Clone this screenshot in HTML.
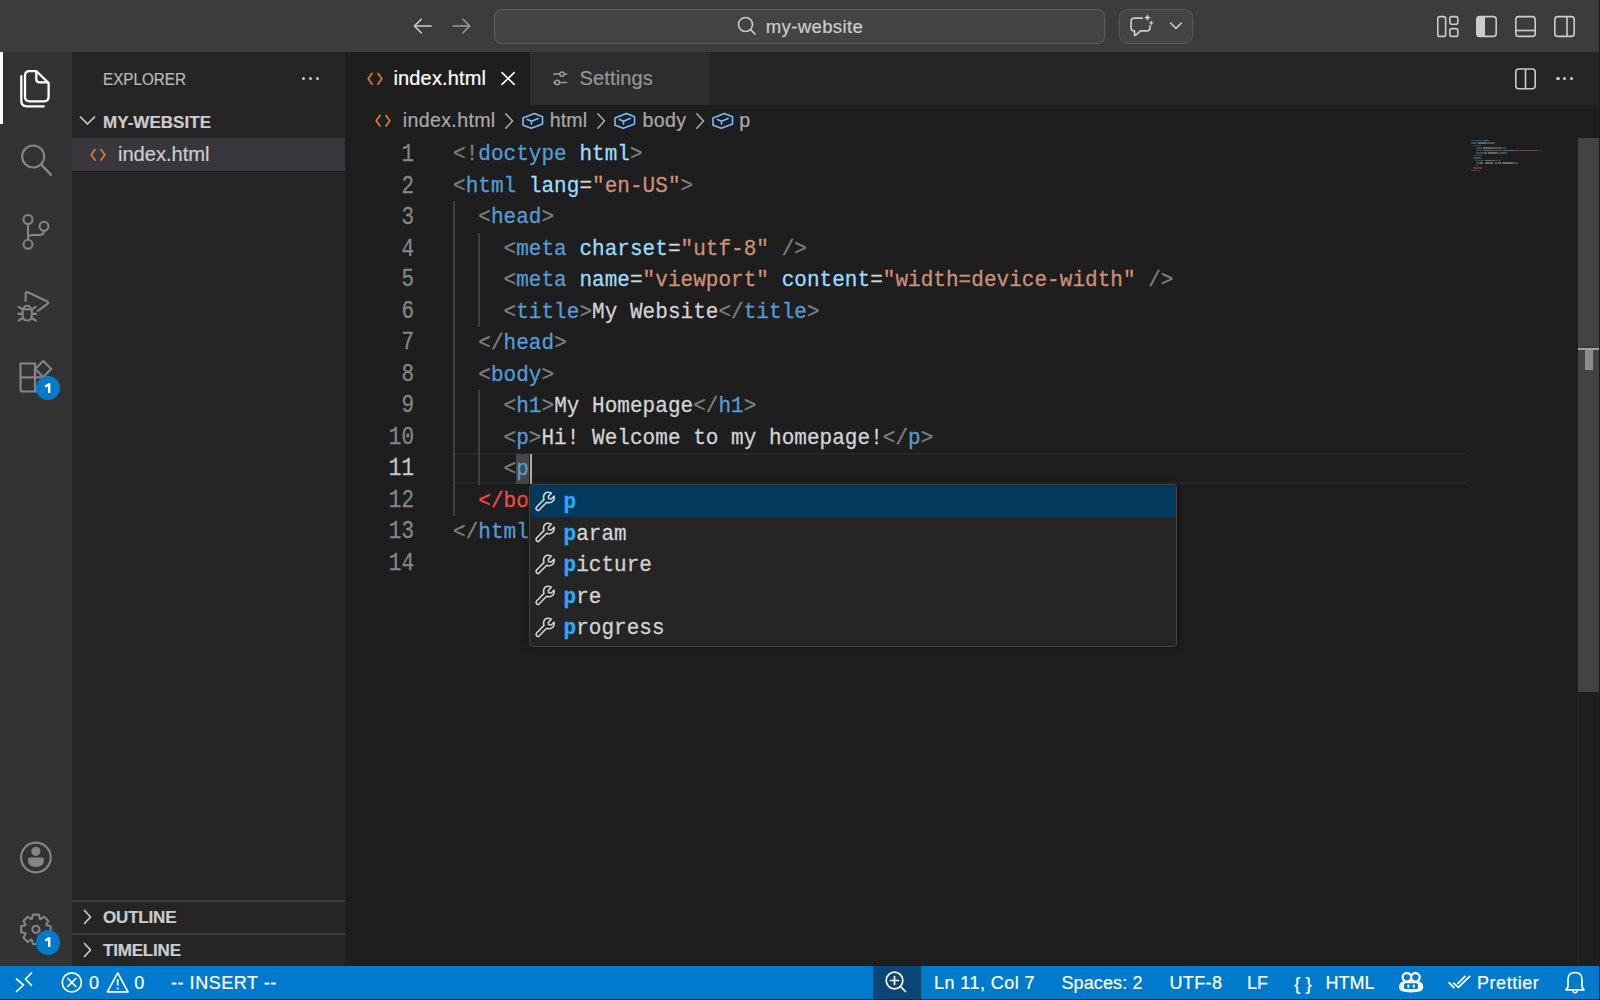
<!DOCTYPE html>
<html><head><meta charset="utf-8"><title>VS Code</title><style>
*{box-sizing:border-box;margin:0;padding:0}
html,body{width:1600px;height:1000px;overflow:hidden;background:#1e1e1e;font-family:"Liberation Sans",sans-serif;position:relative}
.abs{position:absolute}
svg{position:absolute;overflow:visible}
.t{position:absolute;white-space:pre;line-height:1;-webkit-text-stroke:0.2px currentColor}
.ln{position:absolute;left:360px;width:54px;text-align:right;color:#858585;font-family:"Liberation Mono",monospace;font-size:21px;line-height:31.5px;height:31.5px;transform:translateY(1.5px) scaleY(1.2);transform-origin:0 21px;-webkit-text-stroke:0.25px currentColor}
.cl{position:absolute;left:453px;color:#d4d4d4;font-family:"Liberation Mono",monospace;font-size:21px;line-height:31.5px;height:31.5px;white-space:pre;letter-spacing:0.038px;transform:translateY(1.3px) scaleY(1.09);transform-origin:0 21px;-webkit-text-stroke:0.25px currentColor}
.tg{color:#569cd6}.pu{color:#808080}.at{color:#9cdcfe}.st{color:#ce9178}.er{color:#f14c4c}
</style></head><body>
<div class="abs" style="left:0px;top:0px;width:1600px;height:52px;background:#3c3c3c;"></div>
<div class="abs" style="left:0px;top:52px;width:72px;height:914px;background:#333333;"></div>
<div class="abs" style="left:72px;top:52px;width:273px;height:914px;background:#252526;"></div>
<div class="abs" style="left:345px;top:52px;width:1255px;height:53px;background:#252526;"></div>
<div class="abs" style="left:0px;top:966px;width:1600px;height:34px;background:#007acc;"></div>
<svg style="left:405px;top:10px;" width="36" height="32" viewBox="0 0 36 32"><path d="M9.4 16 H26.2 M9.4 16 L16.2 9.2 M9.4 16 L16.2 22.8" stroke="#cccccc" stroke-width="1.6" fill="none" stroke-linecap="round" stroke-linejoin="round"/></svg>
<svg style="left:444px;top:10px;" width="36" height="32" viewBox="0 0 36 32"><path d="M9.2 16 H25.8 M25.8 16 L19 9.2 M25.8 16 L19 22.8" stroke="#9a9a9a" stroke-width="1.6" fill="none" stroke-linecap="round" stroke-linejoin="round"/></svg>
<div class="abs" style="left:493.5px;top:9px;width:611px;height:34.5px;border:1.5px solid #606060;border-radius:7.5px;background:#444444"></div>
<svg style="left:736px;top:14.6px;" width="22" height="22" viewBox="0 0 22 22"><circle cx="9.5" cy="9.5" r="7" stroke="#cccccc" stroke-width="1.6" fill="none"/><path d="M14.5 14.5 L19 19" stroke="#cccccc" stroke-width="1.7" stroke-linecap="round"/></svg>
<div class="t" style="left:765.8px;top:18.06px;font-size:18.6px;color:#cccccc;font-family:'Liberation Sans',sans-serif;letter-spacing:0.322px;">my-website</div>
<div class="abs" style="left:1119px;top:9px;width:74px;height:34.5px;border:1.5px solid #5a5a5a;border-radius:8.5px;background:#444444"></div>
<svg style="left:1126px;top:12px;" width="32" height="30" viewBox="0 0 32 30"><path d="M16.3 6.1 H8.6 Q5.05 6.1 5.05 9.6 V15.4 Q5.05 18.9 8.5 18.9 V22.6 Q8.5 24 9.7 23.1 L14.6 18.9 H20.5 Q23.95 18.9 23.95 15.4 V13.8" stroke="#cccccc" stroke-width="1.7" fill="none" stroke-linejoin="round" stroke-linecap="round"/><path d="M21.4 1.8 Q21.9 5.3 25.2 5.5 Q21.9 5.9 21.4 9.3 Q20.9 5.9 17.6 5.5 Q20.9 5.3 21.4 1.8Z" fill="#cccccc"/><path d="M25.3 8.2 Q25.6 10.7 28.1 10.8 Q25.6 11.2 25.3 13.7 Q25 11.2 22.5 10.8 Q25 10.7 25.3 8.2Z" fill="#cccccc"/></svg>
<svg style="left:1166px;top:18px;" width="20" height="14" viewBox="0 0 20 14"><path d="M4.6 5.0 L10 10.4 L15.4 5.0" stroke="#cccccc" stroke-width="1.6" fill="none" stroke-linecap="round" stroke-linejoin="round"/></svg>
<svg style="left:1430px;top:8px;" width="34" height="36" viewBox="0 0 34 36"><rect x="7.8" y="8.6" width="7.8" height="19.8" rx="2" stroke="#cccccc" stroke-width="1.6" fill="none"/><rect x="19.8" y="8.6" width="8" height="7.6" rx="2" stroke="#cccccc" stroke-width="1.6" fill="none"/><rect x="19.8" y="20.6" width="8" height="7.8" rx="2" stroke="#cccccc" stroke-width="1.6" fill="none"/></svg>
<svg style="left:1470px;top:8px;" width="34" height="36" viewBox="0 0 34 36"><path d="M9 8.6 H15 V28.4 H9 Q6.8 28.4 6.8 26.2 V10.8 Q6.8 8.6 9 8.6Z" fill="#cccccc"/><rect x="6.8" y="8.6" width="19.4" height="19.8" rx="3" stroke="#cccccc" stroke-width="1.6" fill="none"/></svg>
<svg style="left:1509px;top:8px;" width="34" height="36" viewBox="0 0 34 36"><rect x="6.8" y="8.6" width="19.4" height="19.8" rx="3" stroke="#cccccc" stroke-width="1.6" fill="none"/><path d="M6.8 22.5 H26.2" stroke="#cccccc" stroke-width="1.6" fill="none"/></svg>
<svg style="left:1548px;top:8px;" width="34" height="36" viewBox="0 0 34 36"><rect x="6.8" y="8.6" width="19.4" height="19.8" rx="3" stroke="#cccccc" stroke-width="1.6" fill="none"/><path d="M19 8.6 V28.4" stroke="#cccccc" stroke-width="1.6" fill="none"/></svg>
<div class="abs" style="left:0px;top:52px;width:3px;height:72px;background:#ffffff;"></div>
<svg style="left:14px;top:64px;" width="44" height="48" viewBox="0 0 44 48"><path d="M14.5 7.2 H22.5 L34.6 19 V32.8 Q34.6 37.3 30.1 37.3 H15.5 Q11 37.3 11 32.8 V11.7 Q11 7.2 15.5 7.2Z" stroke="#ffffff" stroke-width="2.3" fill="none" stroke-linejoin="round"/><path d="M22.3 7.5 V15.2 Q22.3 18.4 25.5 18.4 H34.3" stroke="#ffffff" stroke-width="2.3" fill="none" stroke-linejoin="round"/><path d="M7.3 12.2 V36.8 Q7.3 42.3 12.8 42.3 H29.8" stroke="#ffffff" stroke-width="2.3" fill="none" stroke-linecap="round" stroke-linejoin="round"/></svg>
<svg style="left:14px;top:136px;" width="44" height="48" viewBox="0 0 44 48"><circle cx="19.2" cy="20.5" r="11" stroke="#858585" stroke-width="2.2" fill="none"/><path d="M27.3 28.6 L37 38.8" stroke="#858585" stroke-width="2.4" stroke-linecap="round"/></svg>
<svg style="left:14px;top:208px;" width="44" height="48" viewBox="0 0 44 48"><circle cx="14" cy="11.5" r="4.5" stroke="#858585" stroke-width="2.1" fill="none"/><circle cx="30" cy="18.3" r="4.5" stroke="#858585" stroke-width="2.1" fill="none"/><circle cx="14" cy="36.3" r="4.5" stroke="#858585" stroke-width="2.1" fill="none"/><path d="M14 16 V31.8 M30 22.8 Q30 27 25.5 27 H18.5 Q14 27 14 30" stroke="#858585" stroke-width="2.1" fill="none"/></svg>
<svg style="left:14px;top:280px;" width="44" height="48" viewBox="0 0 44 48"><path d="M11.6 20.9 V14.2 Q11.6 11.2 14.3 12.5 L33 21.3 Q35.5 22.7 33.1 24.2 L23.8 30.8" stroke="#858585" stroke-width="2.1" fill="none" stroke-linecap="round" stroke-linejoin="round"/><path d="M9.6 29.3 A3.6 3.6 0 0 1 16.8 29.3 M8.6 29.3 H17.9 V35.3 Q17.9 40.5 13.25 40.5 Q8.6 40.5 8.6 35.3 Z" stroke="#858585" stroke-width="2.1" fill="none" stroke-linejoin="round"/><path d="M4.6 26.9 L7.9 28.8 M4.4 33.9 H7.9 M4.6 40.7 L7.9 38.3 M21.9 26.9 L18.6 28.8 M22.1 33.9 H18.6 M21.9 40.7 L18.6 38.3" stroke="#858585" stroke-width="2.1" fill="none" stroke-linecap="round"/></svg>
<svg style="left:14px;top:352px;" width="44" height="48" viewBox="0 0 44 48"><path d="M6.5 11.5 H21 V39.5 H8.5 Q6.5 39.5 6.5 37.5Z M6.5 25.3 H35 V39.5 H21" stroke="#858585" stroke-width="2.2" fill="none" stroke-linejoin="round"/><path d="M29.2 9 L37.2 17 L29.2 25 L21.2 17Z" stroke="#858585" stroke-width="2.2" fill="none" stroke-linejoin="round"/></svg>
<div class="abs" style="left:35.9px;top:376px;width:24.2px;height:24.2px;border-radius:50%;background:#007acc;border:0"></div>
<svg style="left:36px;top:376px;" width="24" height="24" viewBox="0 0 24 24"><path d="M9.3 10.7 L13.2 7.9 M13.2 7.2 V17" stroke="#ffffff" stroke-width="2.4" fill="none" stroke-linejoin="round"/></svg>
<svg style="left:14px;top:822px;left:14px;top:822px" width="44" height="48" viewBox="0 0 44 48"><circle cx="21.9" cy="35.5" r="14.8" stroke="#858585" stroke-width="2.2" fill="none"/><circle cx="21.9" cy="29.3" r="4.6" fill="#858585"/><path d="M13.8 37.5 Q13.8 35.5 16 35.5 H27.8 Q30 35.5 30 37.5 V38 Q30 45 22 45 Q13.8 45 13.8 38Z" fill="#858585"/></svg>
<svg style="left:14px;top:892px;left:14px;top:892px" width="44" height="48" viewBox="0 0 44 48"><polygon points="17.92,26.72 18.92,22.60 24.88,22.60 25.88,26.72 26.56,27.01 30.19,24.80 34.40,29.01 32.19,32.64 32.48,33.32 36.60,34.32 36.60,40.28 32.48,41.28 32.19,41.96 34.40,45.59 30.19,49.80 26.56,47.59 25.88,47.88 24.88,52.00 18.92,52.00 17.92,47.88 17.24,47.59 13.61,49.80 9.40,45.59 11.61,41.96 11.32,41.28 7.20,40.28 7.20,34.32 11.32,33.32 11.61,32.64 9.40,29.01 13.61,24.80 17.24,27.01" stroke="#858585" stroke-width="2.1" fill="none" stroke-linejoin="round"/><circle cx="21.9" cy="37.3" r="3.6" stroke="#858585" stroke-width="2.1" fill="none"/></svg>
<div class="abs" style="left:35.9px;top:930.4px;width:24.2px;height:24.2px;border-radius:50%;background:#007acc"></div>
<svg style="left:36px;top:930.4px;" width="24" height="24" viewBox="0 0 24 24"><path d="M9.3 10.7 L13.2 7.9 M13.2 7.2 V17" stroke="#ffffff" stroke-width="2.4" fill="none" stroke-linejoin="round"/></svg>
<div class="t" style="left:103.0px;top:72.15px;font-size:16.6px;color:#bbbbbb;font-family:'Liberation Sans',sans-serif;transform:scaleX(0.9181);transform-origin:0 0;">EXPLORER</div>
<div class="abs" style="left:301.9px;top:76.8px;width:3.2px;height:3.2px;border-radius:50%;background:#cccccc"></div>
<div class="abs" style="left:308.9px;top:76.8px;width:3.2px;height:3.2px;border-radius:50%;background:#cccccc"></div>
<div class="abs" style="left:315.9px;top:76.8px;width:3.2px;height:3.2px;border-radius:50%;background:#cccccc"></div>
<svg style="left:76px;top:108px;" width="24" height="26" viewBox="0 0 24 26"><path d="M4.5 9 L11.5 16 L18.5 9" stroke="#cccccc" stroke-width="1.7" fill="none" stroke-linecap="round" stroke-linejoin="round"/></svg>
<div class="t" style="left:103.0px;top:113.61px;font-size:17px;color:#cccccc;font-family:'Liberation Sans',sans-serif;font-weight:bold;letter-spacing:0.033px;">MY-WEBSITE</div>
<div class="abs" style="left:72px;top:138px;width:273px;height:33px;background:#37373d;"></div>
<svg style="left:88.1px;top:144.8px;" width="20" height="20" viewBox="0 0 20 20"><path d="M7.0 4.5 L3.2 9.8 L7.0 15.1 M13.0 4.5 L16.8 9.8 L13.0 15.1" stroke="#e37933" stroke-width="1.7" fill="none" stroke-linecap="round" stroke-linejoin="round"/></svg>
<div class="t" style="left:118.0px;top:144.20px;font-size:20.2px;color:#cccccc;font-family:'Liberation Sans',sans-serif;letter-spacing:-0.056px;">index.html</div>
<div class="abs" style="left:72px;top:899.5px;width:273px;height:2px;background:#3d3d3d;"></div>
<div class="abs" style="left:72px;top:932.8px;width:273px;height:2px;background:#3d3d3d;"></div>
<svg style="left:76px;top:906px;" width="24" height="22" viewBox="0 0 24 22"><path d="M8.5 4.5 L14.5 11 L8.5 17.5" stroke="#cccccc" stroke-width="1.7" fill="none" stroke-linecap="round" stroke-linejoin="round"/></svg>
<div class="t" style="left:103.0px;top:909.21px;font-size:17px;color:#cccccc;font-family:'Liberation Sans',sans-serif;font-weight:bold;letter-spacing:-0.183px;">OUTLINE</div>
<svg style="left:76px;top:939px;" width="24" height="22" viewBox="0 0 24 22"><path d="M8.5 4.5 L14.5 11 L8.5 17.5" stroke="#cccccc" stroke-width="1.7" fill="none" stroke-linecap="round" stroke-linejoin="round"/></svg>
<div class="t" style="left:103.0px;top:941.91px;font-size:17px;color:#cccccc;font-family:'Liberation Sans',sans-serif;font-weight:bold;letter-spacing:-0.186px;">TIMELINE</div>
<div class="abs" style="left:345px;top:52px;width:185px;height:53px;background:#1e1e1e;"></div>
<div class="abs" style="left:530px;top:52px;width:179.5px;height:53px;background:#2d2d2d;"></div>
<svg style="left:364.5px;top:68.5px;" width="20" height="20" viewBox="0 0 20 20"><path d="M7.0 4.5 L3.2 9.8 L7.0 15.1 M13.0 4.5 L16.8 9.8 L13.0 15.1" stroke="#e37933" stroke-width="1.7" fill="none" stroke-linecap="round" stroke-linejoin="round"/></svg>
<div class="t" style="left:393.5px;top:68.37px;font-size:20px;color:#ffffff;font-family:'Liberation Sans',sans-serif;letter-spacing:0.144px;">index.html</div>
<svg style="left:497px;top:68px;" width="22" height="22" viewBox="0 0 22 22"><path d="M5 4.6 L17.2 16.4 M17.2 4.6 L5 16.4" stroke="#ffffff" stroke-width="1.6" stroke-linecap="round"/></svg>
<svg style="left:549px;top:67px;" width="22" height="24" viewBox="0 0 22 24"><path d="M4 7.1 H18.2 M4 15.5 H18.2" stroke="#9d9d9d" stroke-width="1.5"/><circle cx="13" cy="7.1" r="2.2" fill="#2d2d2d" stroke="#9d9d9d" stroke-width="1.5"/><circle cx="8.2" cy="15.5" r="2.2" fill="#2d2d2d" stroke="#9d9d9d" stroke-width="1.5"/></svg>
<div class="t" style="left:579.5px;top:68.37px;font-size:20px;color:#969696;font-family:'Liberation Sans',sans-serif;letter-spacing:0.143px;">Settings</div>
<svg style="left:1509px;top:62px;" width="34" height="36" viewBox="0 0 34 36"><rect x="6.8" y="7" width="19.4" height="19.8" rx="3" stroke="#cccccc" stroke-width="1.6" fill="none"/><path d="M16.5 7 V26.8" stroke="#cccccc" stroke-width="1.6" fill="none"/></svg>
<div class="abs" style="left:1556.4px;top:76.5px;width:3.2px;height:3.2px;border-radius:50%;background:#cccccc"></div>
<div class="abs" style="left:1563.0px;top:76.5px;width:3.2px;height:3.2px;border-radius:50%;background:#cccccc"></div>
<div class="abs" style="left:1569.6000000000001px;top:76.5px;width:3.2px;height:3.2px;border-radius:50%;background:#cccccc"></div>
<svg style="left:373.4px;top:111.3px;" width="20" height="20" viewBox="0 0 20 20"><path d="M7.0 4.5 L3.2 9.8 L7.0 15.1 M13.0 4.5 L16.8 9.8 L13.0 15.1" stroke="#e37933" stroke-width="1.7" fill="none" stroke-linecap="round" stroke-linejoin="round"/></svg>
<div class="t" style="left:402.8px;top:111.41px;font-size:19.6px;color:#a9a9a9;font-family:'Liberation Sans',sans-serif;letter-spacing:0.344px;">index.html</div>
<svg style="left:501.5px;top:110px;" width="14" height="22" viewBox="0 0 14 22"><path d="M3.8 3.8 L10.5 11 L3.8 18.2" stroke="#a9a9a9" stroke-width="1.6" fill="none" stroke-linecap="round" stroke-linejoin="round"/></svg>
<svg style="left:520.5px;top:109px;" width="24" height="24" viewBox="0 0 24 24"><path d="M13.4 4.6 L21.5 7.8 V15.1 L10.3 19.3 L2 16.2 V9.1Z" stroke="#75beff" stroke-width="1.6" fill="none" stroke-linejoin="round"/><path d="M6.4 10.4 L10.5 12.3 L17.1 9.4 M10.5 12.3 V15.1" stroke="#75beff" stroke-width="1.6" fill="none" stroke-linecap="round" stroke-linejoin="round"/></svg>
<div class="t" style="left:549.8px;top:111.41px;font-size:19.6px;color:#a9a9a9;font-family:'Liberation Sans',sans-serif;letter-spacing:0.067px;">html</div>
<svg style="left:594px;top:110px;" width="14" height="22" viewBox="0 0 14 22"><path d="M3.8 3.8 L10.5 11 L3.8 18.2" stroke="#a9a9a9" stroke-width="1.6" fill="none" stroke-linecap="round" stroke-linejoin="round"/></svg>
<svg style="left:612.5px;top:109px;" width="24" height="24" viewBox="0 0 24 24"><path d="M13.4 4.6 L21.5 7.8 V15.1 L10.3 19.3 L2 16.2 V9.1Z" stroke="#75beff" stroke-width="1.6" fill="none" stroke-linejoin="round"/><path d="M6.4 10.4 L10.5 12.3 L17.1 9.4 M10.5 12.3 V15.1" stroke="#75beff" stroke-width="1.6" fill="none" stroke-linecap="round" stroke-linejoin="round"/></svg>
<div class="t" style="left:642.5px;top:111.41px;font-size:19.6px;color:#a9a9a9;font-family:'Liberation Sans',sans-serif;letter-spacing:0.333px;">body</div>
<svg style="left:692.5px;top:110px;" width="14" height="22" viewBox="0 0 14 22"><path d="M3.8 3.8 L10.5 11 L3.8 18.2" stroke="#a9a9a9" stroke-width="1.6" fill="none" stroke-linecap="round" stroke-linejoin="round"/></svg>
<svg style="left:710.5px;top:109px;" width="24" height="24" viewBox="0 0 24 24"><path d="M13.4 4.6 L21.5 7.8 V15.1 L10.3 19.3 L2 16.2 V9.1Z" stroke="#75beff" stroke-width="1.6" fill="none" stroke-linejoin="round"/><path d="M6.4 10.4 L10.5 12.3 L17.1 9.4 M10.5 12.3 V15.1" stroke="#75beff" stroke-width="1.6" fill="none" stroke-linecap="round" stroke-linejoin="round"/></svg>
<div class="t" style="left:739.2px;top:111.41px;font-size:19.6px;color:#a9a9a9;font-family:'Liberation Sans',sans-serif;">p</div>
<div class="abs" style="left:453px;top:453.0px;width:1013px;height:31px;border-top:2px solid #282828;border-bottom:2px solid #282828"></div>
<div class="abs" style="left:453px;top:201px;width:2px;height:315px;background:#404040;"></div>
<div class="abs" style="left:478px;top:232.5px;width:2px;height:94.5px;background:#404040;"></div>
<div class="abs" style="left:478px;top:390px;width:2px;height:94.5px;background:#404040;"></div>
<div class="abs" style="left:516px;top:453.5px;width:12.6px;height:30.5px;background:#484848;"></div>
<div class="ln" style="top:138.0px;color:#858585">1</div>
<div class="cl" style="top:138.0px"><span class="pu">&lt;!</span><span class="tg">doctype</span> <span class="at">html</span><span class="pu">&gt;</span></div>
<div class="ln" style="top:169.5px;color:#858585">2</div>
<div class="cl" style="top:169.5px"><span class="pu">&lt;</span><span class="tg">html</span> <span class="at">lang</span>=<span class="st">"en-US"</span><span class="pu">&gt;</span></div>
<div class="ln" style="top:201.0px;color:#858585">3</div>
<div class="cl" style="top:201.0px">  <span class="pu">&lt;</span><span class="tg">head</span><span class="pu">&gt;</span></div>
<div class="ln" style="top:232.5px;color:#858585">4</div>
<div class="cl" style="top:232.5px">    <span class="pu">&lt;</span><span class="tg">meta</span> <span class="at">charset</span>=<span class="st">"utf-8"</span> <span class="pu">/&gt;</span></div>
<div class="ln" style="top:264.0px;color:#858585">5</div>
<div class="cl" style="top:264.0px">    <span class="pu">&lt;</span><span class="tg">meta</span> <span class="at">name</span>=<span class="st">"viewport"</span> <span class="at">content</span>=<span class="st">"width=device-width"</span> <span class="pu">/&gt;</span></div>
<div class="ln" style="top:295.5px;color:#858585">6</div>
<div class="cl" style="top:295.5px">    <span class="pu">&lt;</span><span class="tg">title</span><span class="pu">&gt;</span>My Website<span class="pu">&lt;/</span><span class="tg">title</span><span class="pu">&gt;</span></div>
<div class="ln" style="top:327.0px;color:#858585">7</div>
<div class="cl" style="top:327.0px">  <span class="pu">&lt;/</span><span class="tg">head</span><span class="pu">&gt;</span></div>
<div class="ln" style="top:358.5px;color:#858585">8</div>
<div class="cl" style="top:358.5px">  <span class="pu">&lt;</span><span class="tg">body</span><span class="pu">&gt;</span></div>
<div class="ln" style="top:390.0px;color:#858585">9</div>
<div class="cl" style="top:390.0px">    <span class="pu">&lt;</span><span class="tg">h1</span><span class="pu">&gt;</span>My Homepage<span class="pu">&lt;/</span><span class="tg">h1</span><span class="pu">&gt;</span></div>
<div class="ln" style="top:421.5px;color:#858585">10</div>
<div class="cl" style="top:421.5px">    <span class="pu">&lt;</span><span class="tg">p</span><span class="pu">&gt;</span>Hi! Welcome to my homepage!<span class="pu">&lt;/</span><span class="tg">p</span><span class="pu">&gt;</span></div>
<div class="ln" style="top:453.0px;color:#c6c6c6">11</div>
<div class="cl" style="top:453.0px">    <span class="pu">&lt;</span><span class="tg">p</span></div>
<div class="ln" style="top:484.5px;color:#858585">12</div>
<div class="cl" style="top:484.5px">  <span class="er">&lt;/body&gt;</span></div>
<div class="ln" style="top:516.0px;color:#858585">13</div>
<div class="cl" style="top:516.0px"><span class="pu">&lt;/</span><span class="tg">html</span><span class="pu">&gt;</span></div>
<div class="ln" style="top:547.5px;color:#858585">14</div>
<div class="cl" style="top:547.5px"></div>
<div class="abs" style="left:529.5px;top:454px;width:2.5px;height:30px;background:#aeafad;"></div>
<div class="abs" style="left:529px;top:484px;width:648px;height:163px;background:#252526;border:1.5px solid #454545;border-radius:4px;box-shadow:0 0 8px rgba(0,0,0,0.36)"></div>
<div class="abs" style="left:530.5px;top:485.5px;width:645px;height:31.5px;background:#04395e;"></div>
<svg style="left:533px;top:488.5px;" width="26" height="26" viewBox="0 0 26 26"><path d="M15.2 3.2 Q11.2 3.2 10.6 7.4 Q10.4 9 11 10.4 L3.6 18 Q2.4 19.3 3.6 20.8 Q5 22 6.3 20.8 L13.7 13.2 Q15 13.9 16.7 13.7 Q21 13 21.2 8.8 Q21.3 8 21 7.2 L18.2 10 L15.6 9.8 L15.4 7.2 L18.3 4.2 Q16.8 3.2 15.2 3.2Z" stroke="#d4d4d4" stroke-width="1.6" fill="none" stroke-linejoin="round"/></svg>
<div class="cl" style="left:563.5px;top:486.3px"><span style="color:#2aaaff;font-weight:bold">p</span></div>
<svg style="left:533px;top:520.0px;" width="26" height="26" viewBox="0 0 26 26"><path d="M15.2 3.2 Q11.2 3.2 10.6 7.4 Q10.4 9 11 10.4 L3.6 18 Q2.4 19.3 3.6 20.8 Q5 22 6.3 20.8 L13.7 13.2 Q15 13.9 16.7 13.7 Q21 13 21.2 8.8 Q21.3 8 21 7.2 L18.2 10 L15.6 9.8 L15.4 7.2 L18.3 4.2 Q16.8 3.2 15.2 3.2Z" stroke="#d4d4d4" stroke-width="1.6" fill="none" stroke-linejoin="round"/></svg>
<div class="cl" style="left:563.5px;top:517.8px"><span style="color:#2aaaff;font-weight:bold">p</span>aram</div>
<svg style="left:533px;top:551.5px;" width="26" height="26" viewBox="0 0 26 26"><path d="M15.2 3.2 Q11.2 3.2 10.6 7.4 Q10.4 9 11 10.4 L3.6 18 Q2.4 19.3 3.6 20.8 Q5 22 6.3 20.8 L13.7 13.2 Q15 13.9 16.7 13.7 Q21 13 21.2 8.8 Q21.3 8 21 7.2 L18.2 10 L15.6 9.8 L15.4 7.2 L18.3 4.2 Q16.8 3.2 15.2 3.2Z" stroke="#d4d4d4" stroke-width="1.6" fill="none" stroke-linejoin="round"/></svg>
<div class="cl" style="left:563.5px;top:549.3px"><span style="color:#2aaaff;font-weight:bold">p</span>icture</div>
<svg style="left:533px;top:583.0px;" width="26" height="26" viewBox="0 0 26 26"><path d="M15.2 3.2 Q11.2 3.2 10.6 7.4 Q10.4 9 11 10.4 L3.6 18 Q2.4 19.3 3.6 20.8 Q5 22 6.3 20.8 L13.7 13.2 Q15 13.9 16.7 13.7 Q21 13 21.2 8.8 Q21.3 8 21 7.2 L18.2 10 L15.6 9.8 L15.4 7.2 L18.3 4.2 Q16.8 3.2 15.2 3.2Z" stroke="#d4d4d4" stroke-width="1.6" fill="none" stroke-linejoin="round"/></svg>
<div class="cl" style="left:563.5px;top:580.8px"><span style="color:#2aaaff;font-weight:bold">p</span>re</div>
<svg style="left:533px;top:614.5px;" width="26" height="26" viewBox="0 0 26 26"><path d="M15.2 3.2 Q11.2 3.2 10.6 7.4 Q10.4 9 11 10.4 L3.6 18 Q2.4 19.3 3.6 20.8 Q5 22 6.3 20.8 L13.7 13.2 Q15 13.9 16.7 13.7 Q21 13 21.2 8.8 Q21.3 8 21 7.2 L18.2 10 L15.6 9.8 L15.4 7.2 L18.3 4.2 Q16.8 3.2 15.2 3.2Z" stroke="#d4d4d4" stroke-width="1.6" fill="none" stroke-linejoin="round"/></svg>
<div class="cl" style="left:563.5px;top:612.3px"><span style="color:#2aaaff;font-weight:bold">p</span>rogress</div>
<div class="abs" style="left:1471.00px;top:139.50px;width:2.49px;height:1.5px;background:#808080;opacity:0.4"></div>
<div class="abs" style="left:1473.49px;top:139.50px;width:8.71px;height:1.5px;background:#569cd6;opacity:0.4"></div>
<div class="abs" style="left:1483.45px;top:139.50px;width:4.98px;height:1.5px;background:#9cdcfe;opacity:0.4"></div>
<div class="abs" style="left:1488.43px;top:139.50px;width:1.25px;height:1.5px;background:#808080;opacity:0.4"></div>
<div class="abs" style="left:1471.00px;top:142.00px;width:1.25px;height:1.5px;background:#808080;opacity:0.4"></div>
<div class="abs" style="left:1472.24px;top:142.00px;width:4.98px;height:1.5px;background:#569cd6;opacity:0.4"></div>
<div class="abs" style="left:1478.47px;top:142.00px;width:4.98px;height:1.5px;background:#9cdcfe;opacity:0.4"></div>
<div class="abs" style="left:1483.45px;top:142.00px;width:1.25px;height:1.5px;background:#d4d4d4;opacity:0.4"></div>
<div class="abs" style="left:1484.69px;top:142.00px;width:8.71px;height:1.5px;background:#ce9178;opacity:0.4"></div>
<div class="abs" style="left:1493.41px;top:142.00px;width:1.25px;height:1.5px;background:#808080;opacity:0.4"></div>
<div class="abs" style="left:1473.49px;top:144.50px;width:1.25px;height:1.5px;background:#808080;opacity:0.4"></div>
<div class="abs" style="left:1474.73px;top:144.50px;width:4.98px;height:1.5px;background:#569cd6;opacity:0.4"></div>
<div class="abs" style="left:1479.71px;top:144.50px;width:1.25px;height:1.5px;background:#808080;opacity:0.4"></div>
<div class="abs" style="left:1475.98px;top:147.00px;width:1.25px;height:1.5px;background:#808080;opacity:0.4"></div>
<div class="abs" style="left:1477.22px;top:147.00px;width:4.98px;height:1.5px;background:#569cd6;opacity:0.4"></div>
<div class="abs" style="left:1483.45px;top:147.00px;width:8.71px;height:1.5px;background:#9cdcfe;opacity:0.4"></div>
<div class="abs" style="left:1492.16px;top:147.00px;width:1.25px;height:1.5px;background:#d4d4d4;opacity:0.4"></div>
<div class="abs" style="left:1493.41px;top:147.00px;width:8.71px;height:1.5px;background:#ce9178;opacity:0.4"></div>
<div class="abs" style="left:1503.37px;top:147.00px;width:2.49px;height:1.5px;background:#808080;opacity:0.4"></div>
<div class="abs" style="left:1475.98px;top:149.50px;width:1.25px;height:1.5px;background:#808080;opacity:0.4"></div>
<div class="abs" style="left:1477.22px;top:149.50px;width:4.98px;height:1.5px;background:#569cd6;opacity:0.4"></div>
<div class="abs" style="left:1483.45px;top:149.50px;width:4.98px;height:1.5px;background:#9cdcfe;opacity:0.4"></div>
<div class="abs" style="left:1488.43px;top:149.50px;width:1.25px;height:1.5px;background:#d4d4d4;opacity:0.4"></div>
<div class="abs" style="left:1489.67px;top:149.50px;width:12.45px;height:1.5px;background:#ce9178;opacity:0.4"></div>
<div class="abs" style="left:1503.37px;top:149.50px;width:8.71px;height:1.5px;background:#9cdcfe;opacity:0.4"></div>
<div class="abs" style="left:1512.09px;top:149.50px;width:1.25px;height:1.5px;background:#d4d4d4;opacity:0.4"></div>
<div class="abs" style="left:1513.33px;top:149.50px;width:24.90px;height:1.5px;background:#ce9178;opacity:0.4"></div>
<div class="abs" style="left:1539.47px;top:149.50px;width:2.49px;height:1.5px;background:#808080;opacity:0.4"></div>
<div class="abs" style="left:1475.98px;top:152.00px;width:1.25px;height:1.5px;background:#808080;opacity:0.4"></div>
<div class="abs" style="left:1477.22px;top:152.00px;width:6.23px;height:1.5px;background:#569cd6;opacity:0.4"></div>
<div class="abs" style="left:1483.45px;top:152.00px;width:1.25px;height:1.5px;background:#808080;opacity:0.4"></div>
<div class="abs" style="left:1484.69px;top:152.00px;width:2.49px;height:1.5px;background:#d4d4d4;opacity:0.4"></div>
<div class="abs" style="left:1488.43px;top:152.00px;width:8.71px;height:1.5px;background:#d4d4d4;opacity:0.4"></div>
<div class="abs" style="left:1497.14px;top:152.00px;width:2.49px;height:1.5px;background:#808080;opacity:0.4"></div>
<div class="abs" style="left:1499.63px;top:152.00px;width:6.23px;height:1.5px;background:#569cd6;opacity:0.4"></div>
<div class="abs" style="left:1505.86px;top:152.00px;width:1.25px;height:1.5px;background:#808080;opacity:0.4"></div>
<div class="abs" style="left:1473.49px;top:154.50px;width:2.49px;height:1.5px;background:#808080;opacity:0.4"></div>
<div class="abs" style="left:1475.98px;top:154.50px;width:4.98px;height:1.5px;background:#569cd6;opacity:0.4"></div>
<div class="abs" style="left:1480.96px;top:154.50px;width:1.25px;height:1.5px;background:#808080;opacity:0.4"></div>
<div class="abs" style="left:1473.49px;top:157.00px;width:1.25px;height:1.5px;background:#808080;opacity:0.4"></div>
<div class="abs" style="left:1474.73px;top:157.00px;width:4.98px;height:1.5px;background:#569cd6;opacity:0.4"></div>
<div class="abs" style="left:1479.71px;top:157.00px;width:1.25px;height:1.5px;background:#808080;opacity:0.4"></div>
<div class="abs" style="left:1475.98px;top:159.50px;width:1.25px;height:1.5px;background:#808080;opacity:0.4"></div>
<div class="abs" style="left:1477.22px;top:159.50px;width:2.49px;height:1.5px;background:#569cd6;opacity:0.4"></div>
<div class="abs" style="left:1479.71px;top:159.50px;width:1.25px;height:1.5px;background:#808080;opacity:0.4"></div>
<div class="abs" style="left:1480.96px;top:159.50px;width:2.49px;height:1.5px;background:#d4d4d4;opacity:0.4"></div>
<div class="abs" style="left:1484.69px;top:159.50px;width:9.96px;height:1.5px;background:#d4d4d4;opacity:0.4"></div>
<div class="abs" style="left:1494.65px;top:159.50px;width:2.49px;height:1.5px;background:#808080;opacity:0.4"></div>
<div class="abs" style="left:1497.14px;top:159.50px;width:2.49px;height:1.5px;background:#569cd6;opacity:0.4"></div>
<div class="abs" style="left:1499.63px;top:159.50px;width:1.25px;height:1.5px;background:#808080;opacity:0.4"></div>
<div class="abs" style="left:1475.98px;top:162.00px;width:1.25px;height:1.5px;background:#808080;opacity:0.4"></div>
<div class="abs" style="left:1477.22px;top:162.00px;width:1.25px;height:1.5px;background:#569cd6;opacity:0.4"></div>
<div class="abs" style="left:1478.47px;top:162.00px;width:1.25px;height:1.5px;background:#808080;opacity:0.4"></div>
<div class="abs" style="left:1479.71px;top:162.00px;width:3.74px;height:1.5px;background:#d4d4d4;opacity:0.4"></div>
<div class="abs" style="left:1484.69px;top:162.00px;width:8.71px;height:1.5px;background:#d4d4d4;opacity:0.4"></div>
<div class="abs" style="left:1494.65px;top:162.00px;width:2.49px;height:1.5px;background:#d4d4d4;opacity:0.4"></div>
<div class="abs" style="left:1498.39px;top:162.00px;width:2.49px;height:1.5px;background:#d4d4d4;opacity:0.4"></div>
<div class="abs" style="left:1502.12px;top:162.00px;width:11.21px;height:1.5px;background:#d4d4d4;opacity:0.4"></div>
<div class="abs" style="left:1513.33px;top:162.00px;width:2.49px;height:1.5px;background:#808080;opacity:0.4"></div>
<div class="abs" style="left:1515.82px;top:162.00px;width:1.25px;height:1.5px;background:#569cd6;opacity:0.4"></div>
<div class="abs" style="left:1517.07px;top:162.00px;width:1.25px;height:1.5px;background:#808080;opacity:0.4"></div>
<div class="abs" style="left:1475.98px;top:164.50px;width:1.25px;height:1.5px;background:#808080;opacity:0.4"></div>
<div class="abs" style="left:1477.22px;top:164.50px;width:1.25px;height:1.5px;background:#569cd6;opacity:0.4"></div>
<div class="abs" style="left:1473.49px;top:167.00px;width:8.71px;height:1.5px;background:#f14c4c;opacity:0.4"></div>
<div class="abs" style="left:1471.00px;top:169.50px;width:2.49px;height:1.5px;background:#808080;opacity:0.4"></div>
<div class="abs" style="left:1473.49px;top:169.50px;width:4.98px;height:1.5px;background:#569cd6;opacity:0.4"></div>
<div class="abs" style="left:1478.47px;top:169.50px;width:1.25px;height:1.5px;background:#808080;opacity:0.4"></div>
<div class="abs" style="left:1577.5px;top:138px;width:1px;height:828px;background:#262626;"></div>
<div class="abs" style="left:1578.2px;top:138px;width:20.8px;height:554px;background:#434343;"></div>
<div class="abs" style="left:1578.2px;top:346px;width:20.3px;height:1.5px;background:#3c3c3c;"></div>
<div class="abs" style="left:1578.2px;top:347.5px;width:20.8px;height:2.6px;background:#a0a0a0;"></div>
<div class="abs" style="left:1585px;top:350px;width:8px;height:19.6px;background:#8c8c8c;"></div>
<div class="abs" style="left:1599px;top:0px;width:1px;height:1000px;background:#1a1a1a;"></div>
<div class="abs" style="left:0px;top:998.5px;width:1600px;height:1.5px;background:#0e2b3f;"></div>
<svg style="left:12px;top:968px;" width="26" height="30" viewBox="0 0 26 30"><path d="M4.5 11 L11.5 17 L4.5 23.5 M19.5 5 L13.5 11 L19.5 17.5" stroke="#ffffff" stroke-width="1.7" fill="none" stroke-linecap="round" stroke-linejoin="round"/></svg>
<svg style="left:58px;top:969px;" width="28" height="28" viewBox="0 0 28 28"><circle cx="13.8" cy="13.4" r="9.6" stroke="#ffffff" stroke-width="1.7" fill="none"/><path d="M9.9 9.5 L17.7 17.3 M17.7 9.5 L9.9 17.3" stroke="#ffffff" stroke-width="1.7" stroke-linecap="round"/></svg>
<div class="t" style="left:89px;top:974.46px;font-size:18px;color:#ffffff;font-family:'Liberation Sans',sans-serif;">0</div>
<svg style="left:104px;top:969px;" width="28" height="28" viewBox="0 0 28 28"><path d="M13.7 3.8 L24 22.8 H3.4Z" stroke="#ffffff" stroke-width="1.7" fill="none" stroke-linejoin="round"/><path d="M13.7 10 V16.5" stroke="#ffffff" stroke-width="1.8"/><circle cx="13.7" cy="19.5" r="1.1" fill="#ffffff"/></svg>
<div class="t" style="left:134.3px;top:974.46px;font-size:18px;color:#ffffff;font-family:'Liberation Sans',sans-serif;">0</div>
<div class="t" style="left:171.0px;top:974.36px;font-size:18px;color:#ffffff;font-family:'Liberation Sans',sans-serif;letter-spacing:0.536px;">-- INSERT --</div>
<div class="abs" style="left:872.5px;top:966px;width:48px;height:32.5px;background:#0c4676;"></div>
<svg style="left:882px;top:968px;" width="28" height="28" viewBox="0 0 28 28"><circle cx="12.5" cy="12.5" r="8.3" stroke="#ffffff" stroke-width="1.7" fill="none"/><path d="M12.5 8.5 V16.5 M8.5 12.5 H16.5 M18.5 18.5 L23.5 23.5" stroke="#ffffff" stroke-width="1.7" stroke-linecap="round"/></svg>
<div class="t" style="left:934.0px;top:974.46px;font-size:18px;color:#ffffff;font-family:'Liberation Sans',sans-serif;letter-spacing:0.436px;">Ln 11, Col 7</div>
<div class="t" style="left:1061.5px;top:974.46px;font-size:18px;color:#ffffff;font-family:'Liberation Sans',sans-serif;letter-spacing:0.113px;">Spaces: 2</div>
<div class="t" style="left:1169.5px;top:974.46px;font-size:18px;color:#ffffff;font-family:'Liberation Sans',sans-serif;letter-spacing:0.375px;">UTF-8</div>
<div class="t" style="left:1247px;top:974.46px;font-size:18px;color:#ffffff;font-family:'Liberation Sans',sans-serif;">LF</div>
<div class="t" style="left:1294.0px;top:974.42px;font-size:19px;color:#ffffff;font-family:'Liberation Sans',sans-serif;letter-spacing:0.000px;">{ }</div>
<div class="t" style="left:1325.5px;top:974.46px;font-size:18px;color:#ffffff;font-family:'Liberation Sans',sans-serif;letter-spacing:0.000px;">HTML</div>
<svg style="left:1396px;top:968px;" width="30" height="28" viewBox="0 0 30 28"><path d="M3 19.2 Q3 13.6 8.5 13.2 H21.7 Q27.2 13.6 27.2 19.2 Q27.2 24.4 15.1 24.4 Q3 24.4 3 19.2Z" fill="#ffffff"/><circle cx="10.9" cy="9.3" r="4.3" stroke="#ffffff" stroke-width="2.3" fill="#007acc"/><circle cx="19.4" cy="9.3" r="4.3" stroke="#ffffff" stroke-width="2.3" fill="#007acc"/><rect x="8" y="15.2" width="14" height="5.9" rx="1.6" fill="#007acc"/><rect x="11.4" y="16.4" width="1.9" height="3.4" rx=".9" fill="#ffffff"/><rect x="16.8" y="16.4" width="1.9" height="3.4" rx=".9" fill="#ffffff"/></svg>
<svg style="left:1446px;top:968px;" width="28" height="28" viewBox="0 0 28 28"><path d="M3 14.7 L7.8 19.5 M7.6 15.1 L12.4 19.3 L23.7 8.4 M11.9 15.3 L19.1 8.4" stroke="#ffffff" stroke-width="1.8" fill="none" stroke-linecap="round" stroke-linejoin="round"/></svg>
<div class="t" style="left:1477.0px;top:974.46px;font-size:18px;color:#ffffff;font-family:'Liberation Sans',sans-serif;letter-spacing:0.543px;">Prettier</div>
<svg style="left:1562px;top:968px;" width="26" height="28" viewBox="0 0 26 28"><path d="M6 19 V11.5 Q6 4.5 13 4.5 Q20 4.5 20 11.5 V19 L22 21.8 H4 Z" stroke="#ffffff" stroke-width="1.7" fill="none" stroke-linejoin="round"/><path d="M10.8 22.5 Q11 24.8 13 24.8 Q15 24.8 15.2 22.5" stroke="#ffffff" stroke-width="1.5" fill="none"/></svg>
</body></html>
